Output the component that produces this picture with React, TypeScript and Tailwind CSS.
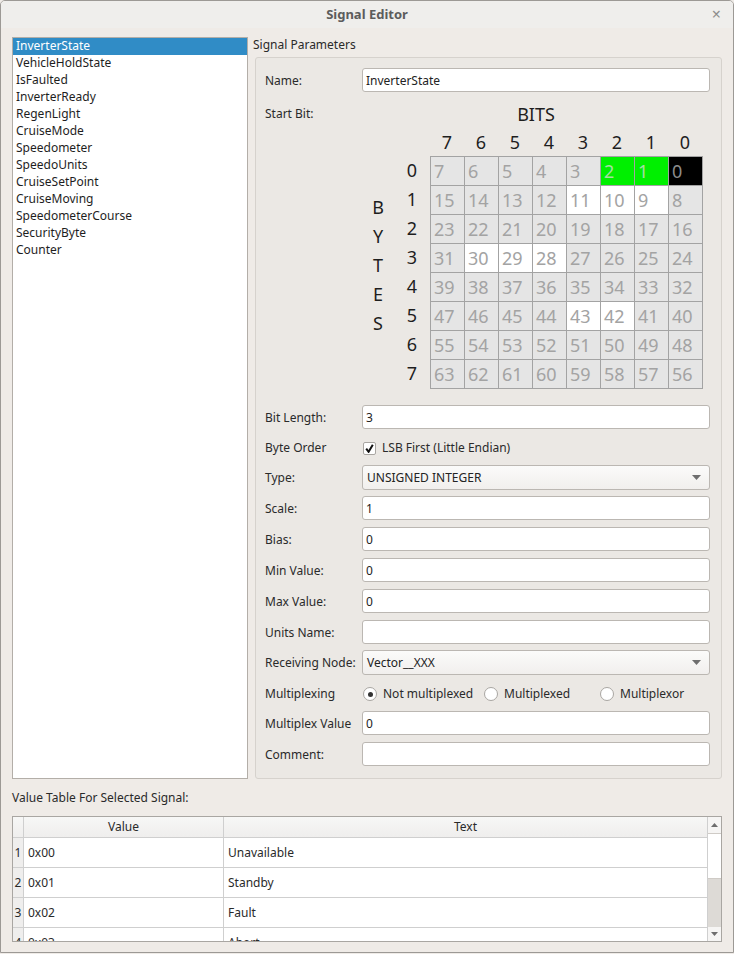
import { useState } from "react";

const signals = [
  "InverterState",
  "VehicleHoldState",
  "IsFaulted",
  "InverterReady",
  "RegenLight",
  "CruiseMode",
  "Speedometer",
  "SpeedoUnits",
  "CruiseSetPoint",
  "CruiseMoving",
  "SpeedometerCourse",
  "SecurityByte",
  "Counter",
];

const valueRows = [
  { value: "0x00", text: "Unavailable" },
  { value: "0x01", text: "Standby" },
  { value: "0x02", text: "Fault" },
  { value: "0x03", text: "Abort" },
];

const whiteBits = [11, 10, 9, 30, 29, 28, 43, 42];
const greenBits = [2, 1];

function Field({ value = "" }: { value?: string }) {
  return (
    <div className="h-[24px] w-[348px] bg-white border border-[#bbb7b2] rounded-[3px] flex items-center px-[3px] pt-[1px] text-[#232323]">
      {value}
    </div>
  );
}

function Combo({ value }: { value: string }) {
  return (
    <div className="h-[25px] w-[348px] bg-gradient-to-b from-[#fbfbfa] to-[#f1efed] border border-[#bbb7b2] rounded-[3px] flex items-center justify-between pl-[4px] pr-[8px] text-[#232323]">
      <span>{value}</span>
      <svg width="9" height="5" viewBox="0 0 9 5">
        <path d="M0 0 L9 0 L4.5 5 Z" fill="#6e6e6e" />
      </svg>
    </div>
  );
}

function Radio({ checked, label, width }: { checked?: boolean; label: string; width: string }) {
  return (
    <div className={`flex items-center gap-[6px] ${width}`}>
      <span className="ml-[1px] w-[14px] h-[14px] rounded-full border border-[#a9a6a2] bg-white flex items-center justify-center">
        {checked && <span className="w-[5px] h-[5px] rounded-full bg-[#333]" />}
      </span>
      <span>{label}</span>
    </div>
  );
}

function Row({ label, h, children }: { label: string; h: string; children: React.ReactNode }) {
  return (
    <div className={`flex items-start ${h}`}>
      <div className="w-[97px] h-[24px] pt-[2px] flex items-center">{label}</div>
      {children}
    </div>
  );
}

function BitGrid() {
  const cells = [];
  for (let r = 0; r < 8; r++) {
    for (let b = 7; b >= 0; b--) {
      const n = r * 8 + b;
      let cls = "bg-[#e5e5e5] text-[#a3a3a3]";
      if (whiteBits.includes(n)) cls = "bg-white text-[#a3a3a3]";
      if (greenBits.includes(n)) cls = "bg-[#00f000] text-[#a6dca6]";
      if (n === 0) cls = "bg-black text-[#8c8c8c]";
      cells.push(
        <div key={n} className={`flex items-center pl-[3px] text-[18px] leading-none ${cls}`}>
          {n}
        </div>
      );
    }
  }
  return (
    <div className="flex flex-col w-[348px] text-[18px] text-[#1e1e1e]">
      <div className="pt-[3px] h-[27px] leading-[24px] text-center">BITS</div>
      <div className="mt-[4px] h-[24px] leading-[24px] flex pl-[68px]">
        {[7, 6, 5, 4, 3, 2, 1, 0].map((b) => (
          <div key={b} className="w-[34px] text-center">
            {b}
          </div>
        ))}
      </div>
      <div className="mt-[2px] flex">
        <div className="w-[32px] pt-[37px] flex flex-col items-center">
          {["B", "Y", "T", "E", "S"].map((c) => (
            <div key={c} className="h-[29px] leading-[29px]">
              {c}
            </div>
          ))}
        </div>
        <div className="w-[36px] flex flex-col items-center">
          {[0, 1, 2, 3, 4, 5, 6, 7].map((r) => (
            <div key={r} className="h-[29px] leading-[29px]">
              {r}
            </div>
          ))}
        </div>
        <div className="grid grid-cols-[repeat(8,33px)] grid-rows-[repeat(8,28px)] gap-px bg-[#a3a3a3] border border-[#a3a3a3] h-fit">
          {cells}
        </div>
      </div>
    </div>
  );
}

export default function App() {
  const [selected, setSelected] = useState(0);

  return (
    <div className="w-[734px] h-[954px] bg-[#efebe7] font-['Noto_Sans',sans-serif] text-[12px] text-[#2a2a2a]">
      <div className="w-[734px] h-[953px] border border-[#9c9995] rounded-t-[5px] flex flex-col overflow-hidden">
        {/* title bar */}
        <div className="h-[27px] shrink-0 bg-[#efeeec] flex items-center justify-center relative">
          <span className="text-[13px] font-bold text-[#5c5c5c]">Signal Editor</span>
          <span className="absolute right-[12px] top-[4px] text-[16px] text-[#8d8d8d] leading-[18px]">×</span>
        </div>

        <div className="px-[11px] pt-[9px] flex flex-col">
          <div className="h-[742px] flex gap-[5px]">
            {/* signal list */}
            <div className="w-[236px] bg-white border border-[#b3aea8]">
              {signals.map((s, i) => (
                <div
                  key={s}
                  onClick={() => setSelected(i)}
                  className={`h-[17px] leading-[16px] pl-[3px] ${
                    selected === i ? "bg-[#308cc6] text-white" : "text-[#1e1e1e]"
                  }`}
                >
                  {s}
                </div>
              ))}
            </div>

            {/* parameters */}
            <div className="flex-1 flex flex-col">
              <div className="h-[20px] leading-[16px]">Signal Parameters</div>
              <div className="ml-[2px] flex-1 border border-[#d6d2cd] rounded-[3px] bg-[#ebe8e4] pl-[9px] pr-[10px] pt-[10px] flex flex-col">
                <Row label="Name:" h="h-[31px]">
                  <Field value="InverterState" />
                </Row>
                <div className="flex h-[306px]">
                  <div className="w-[97px] pt-[3px] leading-[24px]">Start Bit:</div>
                  <BitGrid />
                </div>
                <Row label="Bit Length:" h="h-[30px]">
                  <Field value="3" />
                </Row>
                <Row label="Byte Order" h="h-[30px]">
                  <div className="h-[24px] pt-[2px] flex items-center gap-[6px]">
                    <span className="ml-[1px] w-[13px] h-[13px] bg-white border border-[#a9a6a2] rounded-[2px] flex items-center justify-center">
                      <svg width="9" height="9" viewBox="0 0 9 9">
                        <path d="M1.2 4.6 L3.6 7.8 L7.8 0.8" stroke="#111" strokeWidth="2" fill="none" />
                      </svg>
                    </span>
                    <span>LSB First (Little Endian)</span>
                  </div>
                </Row>
                <Row label="Type:" h="h-[31px]">
                  <Combo value="UNSIGNED INTEGER" />
                </Row>
                <Row label="Scale:" h="h-[31px]">
                  <Field value="1" />
                </Row>
                <Row label="Bias:" h="h-[31px]">
                  <Field value="0" />
                </Row>
                <Row label="Min Value:" h="h-[31px]">
                  <Field value="0" />
                </Row>
                <Row label="Max Value:" h="h-[31px]">
                  <Field value="0" />
                </Row>
                <Row label="Units Name:" h="h-[30px]">
                  <Field />
                </Row>
                <Row label="Receiving Node:" h="h-[31px]">
                  <Combo value="Vector__XXX" />
                </Row>
                <Row label="Multiplexing" h="h-[30px]">
                  <div className="h-[24px] pt-[2px] flex items-center">
                    <Radio checked label="Not multiplexed" width="w-[121px]" />
                    <Radio label="Multiplexed" width="w-[116px]" />
                    <Radio label="Multiplexor" width="w-[100px]" />
                  </div>
                </Row>
                <Row label="Multiplex Value" h="h-[31px]">
                  <Field value="0" />
                </Row>
                <Row label="Comment:" h="h-[24px]">
                  <Field />
                </Row>
              </div>
            </div>
          </div>

          <div className="h-[37px] flex items-center">Value Table For Selected Signal:</div>

          {/* value table */}
          <div className="h-[126px] border border-[#a9a6a2] bg-white flex overflow-hidden">
            <div className="flex-1 flex flex-col">
              <div className="h-[21px] shrink-0 flex border-b border-[#cfcfcf] bg-gradient-to-b from-[#f7f7f6] to-[#efeeed]">
                <div className="w-[11px] border-r border-[#cfcfcf]" />
                <div className="w-[200px] border-r border-[#cfcfcf] flex items-center justify-center">Value</div>
                <div className="flex-1 flex items-center justify-center">Text</div>
              </div>
              {valueRows.map((r, i) => (
                <div key={r.value} className="h-[30px] shrink-0 flex border-b border-[#cfcfcf]">
                  <div className="w-[11px] border-r border-[#cfcfcf] bg-[#efeeed] flex items-center justify-center">
                    {i + 1}
                  </div>
                  <div className="w-[200px] border-r border-[#cfcfcf] flex items-center pl-[4px]">{r.value}</div>
                  <div className="flex-1 flex items-center pl-[4px]">{r.text}</div>
                </div>
              ))}
            </div>
            <div className="w-[14px] border-l border-[#cfcfcf] bg-[#dddad6] flex flex-col">
              <div className="h-[16px] bg-[#f6f5f4] flex items-center justify-center">
                <svg width="7" height="4" viewBox="0 0 7 4">
                  <path d="M0 4 L7 4 L3.5 0 Z" fill="#6e6e6e" />
                </svg>
              </div>
              <div className="h-[46px] bg-white border-y border-[#cfcbc6]" />
              <div className="flex-1" />
              <div className="h-[14px] bg-[#f6f5f4] flex items-center justify-center">
                <svg width="7" height="4" viewBox="0 0 7 4">
                  <path d="M0 0 L7 0 L3.5 4 Z" fill="#6e6e6e" />
                </svg>
              </div>
            </div>
          </div>
        </div>
      </div>
    </div>
  );
}
